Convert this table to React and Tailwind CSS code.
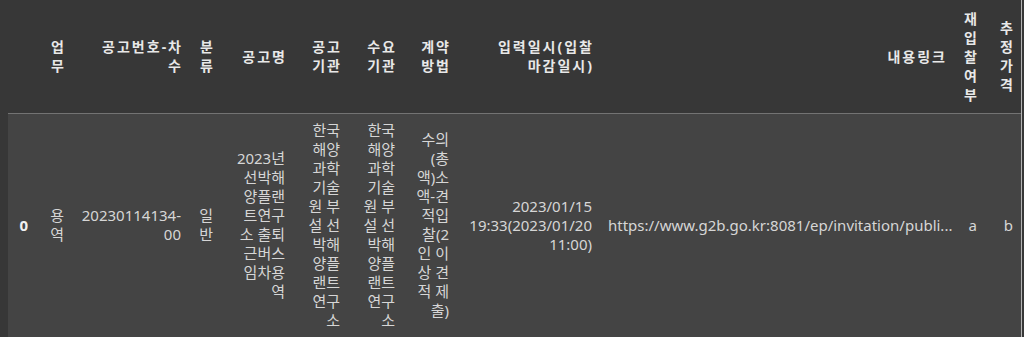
const agency = ["한국", "해양", "과학", "기술", "원 부", "설 선", "박해", "양플", "랜트", "연구", "소"];

const columns = [
    { width: "w-[28px]", head: [], body: ["0"], index: true },
    { width: "w-[36px]", head: ["업", "무"], body: ["용", "역"] },
    { width: "w-[117px]", head: ["공고번호-차", "수"], body: ["20230114134-", "00"] },
    { width: "w-[32px]", head: ["분", "류"], body: ["일", "반"] },
    {
        width: "w-[72px]",
        head: ["공고명"],
        body: ["2023년", "선박해", "양플랜", "트연구", "소 출퇴", "근버스", "임차용", "역"],
    },
    { width: "w-[55px]", head: ["공고", "기관"], body: agency },
    { width: "w-[55px]", head: ["수요", "기관"], body: agency },
    {
        width: "w-[54px]",
        head: ["계약", "방법"],
        body: ["수의", "(총", "액)소", "액-견", "적입", "찰(2", "인 이", "상 견", "적 제", "출)"],
    },
    {
        width: "w-[143px]",
        head: ["입력일시(입찰", "마감일시)"],
        body: ["2023/01/15", "19:33(2023/01/20", "11:00)"],
    },
    {
        width: "w-[353px]",
        head: ["내용링크"],
        body: ["https://www.g2b.go.kr:8081/ep/invitation/publi..."],
    },
    { width: "w-[32px]", head: ["재", "입", "찰", "여", "부"], body: ["a"] },
    { width: "w-[36px]", head: ["추", "정", "가", "격"], body: ["b"] },
];

function Lines({ lines, className }) {
    return lines.map((line, i) => (
        <div key={i} className={`whitespace-nowrap leading-[19px] ${className}`}>
            {line}
        </div>
    ));
}

export default function App() {
    return (
        <div
            className="flex w-[1024px] h-[337px] overflow-hidden bg-[#373737]"
            style={{ fontFamily: '"Noto Sans", "Noto Sans CJK KR", sans-serif' }}
        >
            <div className="w-[8px] shrink-0" />
            <table className="table-fixed border-collapse w-[1013px] shrink-0 self-start">
                <colgroup>
                    {columns.map((col, i) => (
                        <col key={i} className={col.width} />
                    ))}
                </colgroup>
                <thead>
                    <tr className="h-[113px] border-b border-[#737373]">
                        {columns.map((col, i) => (
                            <th
                                key={i}
                                className="px-[8px] p-0 align-middle text-right font-bold text-[#e8e8e8]"
                            >
                                <Lines
                                    lines={col.head}
                                    className="text-[14px] tracking-[2px] -mr-[2px]"
                                />
                            </th>
                        ))}
                    </tr>
                </thead>
                <tbody>
                    <tr className="bg-[#444444]">
                        {columns.map((col, i) => (
                            <td
                                key={i}
                                className={`px-[8px] py-[7px] align-middle text-right ${
                                    col.index
                                        ? "font-bold text-[#f0f0f0]"
                                        : "text-[#d6d6d6]"
                                }`}
                            >
                                <Lines lines={col.body} className="text-[15px]" />
                            </td>
                        ))}
                    </tr>
                </tbody>
            </table>
            <div className="w-[1px] shrink-0 bg-[#b4b4b4]" />
        </div>
    );
}
